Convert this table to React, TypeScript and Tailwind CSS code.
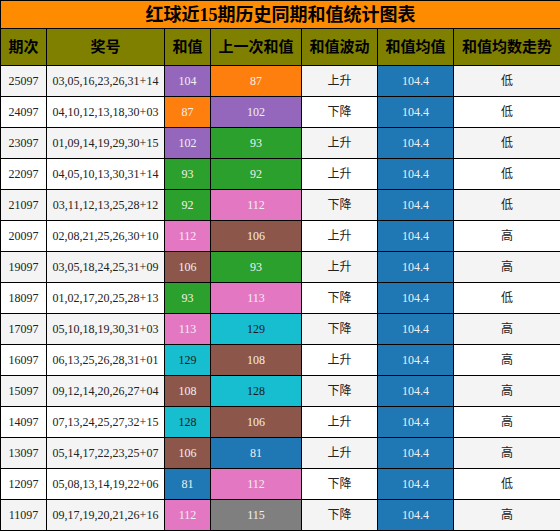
const C: Record<string, string> = {
  purple: "bg-[#9467bd] text-[#f0f0f0]",
  orange: "bg-[#ff7f0e] text-[#f0f0f0]",
  green: "bg-[#2ca02c] text-[#f0f0f0]",
  pink: "bg-[#e377c2] text-[#f0f0f0]",
  brown: "bg-[#8c564b] text-[#f0f0f0]",
  cyan: "bg-[#17becf] text-[#1a1a1a]",
  blue: "bg-[#1f77b4] text-[#f0f0f0]",
  gray: "bg-[#7f7f7f] text-[#f0f0f0]",
};

const rows: [string, string, string, string, string, string, string, string][] = [
  ["25097", "03,05,16,23,26,31+14", "104", "purple", "87", "orange", "上升", "低"],
  ["24097", "04,10,12,13,18,30+03", "87", "orange", "102", "purple", "下降", "低"],
  ["23097", "01,09,14,19,29,30+15", "102", "purple", "93", "green", "上升", "低"],
  ["22097", "04,05,10,13,30,31+14", "93", "green", "92", "green", "上升", "低"],
  ["21097", "03,11,12,13,25,28+12", "92", "green", "112", "pink", "下降", "低"],
  ["20097", "02,08,21,25,26,30+10", "112", "pink", "106", "brown", "上升", "高"],
  ["19097", "03,05,18,24,25,31+09", "106", "brown", "93", "green", "上升", "高"],
  ["18097", "01,02,17,20,25,28+13", "93", "green", "113", "pink", "下降", "低"],
  ["17097", "05,10,18,19,30,31+03", "113", "pink", "129", "cyan", "下降", "高"],
  ["16097", "06,13,25,26,28,31+01", "129", "cyan", "108", "brown", "上升", "高"],
  ["15097", "09,12,14,20,26,27+04", "108", "brown", "128", "cyan", "下降", "高"],
  ["14097", "07,13,24,25,27,32+15", "128", "cyan", "106", "brown", "上升", "高"],
  ["13097", "05,14,17,22,23,25+07", "106", "brown", "81", "blue", "上升", "高"],
  ["12097", "05,08,13,14,19,22+06", "81", "blue", "112", "pink", "下降", "低"],
  ["11097", "09,17,19,20,21,26+16", "112", "pink", "115", "gray", "下降", "高"],
];

const headers = ["期次", "奖号", "和值", "上一次和值", "和值波动", "和值均值", "和值均数走势"];

export default function App() {
  return (
    <div className="w-[560px] h-[531px] bg-white font-['Liberation_Serif','Noto_Sans_CJK_SC',serif] text-[#222]">
      <table className="w-[560px] table-fixed border-collapse">
        <colgroup>
          <col className="w-[46px]" />
          <col className="w-[118px]" />
          <col className="w-[46px]" />
          <col className="w-[91px]" />
          <col className="w-[76px]" />
          <col className="w-[76px]" />
          <col className="w-[107px]" />
        </colgroup>
        <thead>
          <tr className="h-[28px]">
            <th
              colSpan={7}
              className="border border-black bg-[#ff8c00] text-[18px] font-bold text-black leading-none"
            >
              红球近15期历史同期和值统计图表
            </th>
          </tr>
          <tr className="h-[37px] bg-[#808000]">
            {headers.map((h) => (
              <th key={h} className="border border-black text-[15px] font-bold text-black p-0">
                {h}
              </th>
            ))}
          </tr>
        </thead>
        <tbody>
          {rows.map((r, i) => {
            const bg = i % 2 === 0 ? "bg-[#f4f4f4]" : "bg-white";
            return (
              <tr key={r[0]} className="h-[31px] text-[12px] text-center">
                <td className={`border border-black p-0 ${bg}`}>{r[0]}</td>
                <td className={`border border-black p-0 ${bg}`}>{r[1]}</td>
                <td className={`border border-black p-0 ${C[r[3]]}`}>{r[2]}</td>
                <td className={`border border-black p-0 ${C[r[5]]}`}>{r[4]}</td>
                <td className={`border border-black p-0 ${bg}`}>{r[6]}</td>
                <td className="border border-black p-0 bg-[#1f77b4] text-[#f0f0f0]">104.4</td>
                <td className={`border border-black p-0 ${bg}`}>{r[7]}</td>
              </tr>
            );
          })}
        </tbody>
      </table>
    </div>
  );
}
